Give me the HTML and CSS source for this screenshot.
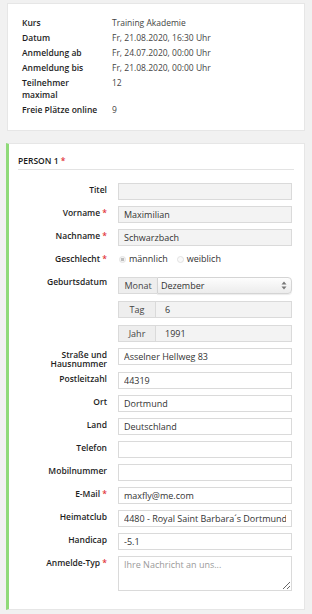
FILE: index.html
```html
<!DOCTYPE html>
<html lang="de">
<head>
<meta charset="utf-8">
<title>Anmeldung</title>
<link rel="stylesheet" href="styles.css">
</head>
<body>
<div class="page">
  <section class="card info">
    <dl class="info-grid">
      <dt>Kurs</dt><dd>Training Akademie</dd>
      <dt>Datum</dt><dd>Fr, 21.08.2020, 16:30 Uhr</dd>
      <dt>Anmeldung ab</dt><dd>Fr, 24.07.2020, 00:00 Uhr</dd>
      <dt>Anmeldung bis</dt><dd>Fr, 21.08.2020, 00:00 Uhr</dd>
      <dt>Teilnehmer<br>maximal</dt><dd>12</dd>
      <dt>Freie Plätze online</dt><dd>9</dd>
    </dl>
  </section>

  <section class="card person">
    <h2 class="person-title">PERSON 1 <span class="req">*</span></h2>
    <form class="form">
      <label class="lbl">Titel</label>
      <div class="ctl"><input class="inp gray" type="text"></div>

      <label class="lbl">Vorname <span class="req">*</span></label>
      <div class="ctl"><input class="inp gray" type="text" value="Maximilian"></div>

      <label class="lbl">Nachname <span class="req">*</span></label>
      <div class="ctl"><input class="inp gray" type="text" value="Schwarzbach"></div>

      <label class="lbl lbl-radio">Geschlecht <span class="req">*</span></label>
      <div class="ctl radios">
        <label class="radio"><input type="radio" name="g" checked><span>männlich</span></label>
        <label class="radio"><input type="radio" name="g"><span>weiblich</span></label>
      </div>

      <label class="lbl lbl-date">Geburtsdatum</label>
      <div class="ctl dates">
        <div class="group">
          <span class="addon addon-month">Monat</span>
          <div class="select-wrap">
            <select class="select"><option>Dezember</option></select>
            <svg class="arrows" width="6" height="9" viewBox="0 0 6 9"><path d="M3 0.5 L5.5 3.5 H0.5 Z M3 8.5 L5.5 5.5 H0.5 Z" fill="#777"/></svg>
          </div>
        </div>
        <div class="group">
          <span class="addon">Tag</span>
          <input class="inp gray grp-inp" type="text" value="6">
        </div>
        <div class="group">
          <span class="addon">Jahr</span>
          <input class="inp gray grp-inp" type="text" value="1991">
        </div>
      </div>

      <label class="lbl lbl-two">Straße und Hausnummer</label>
      <div class="ctl"><input class="inp" type="text" value="Asselner Hellweg 83"></div>

      <label class="lbl">Postleitzahl</label>
      <div class="ctl"><input class="inp" type="text" value="44319"></div>

      <label class="lbl">Ort</label>
      <div class="ctl"><input class="inp" type="text" value="Dortmund"></div>

      <label class="lbl">Land</label>
      <div class="ctl"><input class="inp" type="text" value="Deutschland"></div>

      <label class="lbl">Telefon</label>
      <div class="ctl"><input class="inp" type="text"></div>

      <label class="lbl">Mobilnummer</label>
      <div class="ctl"><input class="inp" type="text"></div>

      <label class="lbl">E-Mail <span class="req">*</span></label>
      <div class="ctl"><input class="inp" type="text" value="maxfly@me.com"></div>

      <label class="lbl">Heimatclub</label>
      <div class="ctl"><input class="inp" type="text" value="4480 - Royal Saint Barbara´s Dortmund"></div>

      <label class="lbl">Handicap</label>
      <div class="ctl"><input class="inp" type="text" value="-5.1"></div>

      <label class="lbl">Anmelde-Typ <span class="req">*</span></label>
      <div class="ctl"><textarea class="inp area" placeholder="Ihre Nachricht an uns..."></textarea></div>
    </form>
  </section>
</div>
</body>
</html>
```
FILE: styles.css
```css
* { box-sizing: border-box; }
html, body { margin: 0; padding: 0; }
body {
  background: #f1f1f1;
  font-family: "Open Sans", "Noto Sans", sans-serif;
  color: #222;
  width: 312px;
  height: 614px;
  overflow: hidden;
}
.page {
  padding: 3px 7px 0 7px;
  display: flex;
  flex-direction: column;
  gap: 12px;
}
.card {
  background: #fff;
  border: 1px solid #e6e6e6;
}
.info {
  padding: 13px 10px 14px 14px;
}
.info-grid {
  margin: 0;
  display: grid;
  grid-template-columns: 90px 1fr;
  row-gap: 3px;
  font-size: 8.5px;
  line-height: 12px;
}
.info-grid dt {
  font-weight: 600;
  color: #1e1e1e;
}
.info-grid dd {
  margin: 0;
  color: #444;
}
.person {
  border-left: 3px solid #8fda79;
  margin-left: -1px;
  padding: 11px 10px 18px 9px;
}
.person-title {
  margin: 0;
  font-size: 8.5px;
  font-weight: 600;
  line-height: 12px;
  padding-bottom: 2px;
  border-bottom: 1px solid #e3e3e3;
  color: #1a1a1a;
}
.req { color: #e2343a; }
.form {
  margin-top: 13px;
  padding-right: 2px;
  display: grid;
  grid-template-columns: 89px 1fr;
  column-gap: 11px;
  row-gap: 6px;
}
.lbl {
  text-align: right;
  font-size: 8.5px;
  font-weight: 600;
  line-height: 10px;
  padding-top: 2px;
  color: #1e1e1e;
}
.lbl-radio { padding-top: 2px; }
.lbl-date { padding-top: 0; }
.lbl-two {
  line-height: 9px;
  padding-top: 2px;
  margin-bottom: -2px;
}
.ctl { min-width: 0; }
.inp {
  display: block;
  width: 100%;
  height: 17px;
  border: 1px solid #dadada;
  background: #fff;
  padding: 0 5px;
  font-family: "Open Sans", sans-serif;
  font-size: 9px;
  line-height: 15px;
  color: #333;
  outline: none;
  border-radius: 0;
  margin: 0;
}
.inp.gray { background: #f3f3f3; }
.area {
  height: 35px;
  padding: 2px 5px;
  resize: vertical;
  line-height: 12px;
}
.area::placeholder { color: #9a9a9a; }
.radios {
  height: 19px;
  display: flex;
  gap: 8px;
  align-items: flex-start;
  padding-top: 1px;
}
.radio {
  display: flex;
  align-items: center;
  gap: 3px;
  font-family: "Open Sans", sans-serif;
  font-size: 9px;
  line-height: 12px;
  color: #333;
}
.radio input {
  appearance: none;
  -webkit-appearance: none;
  width: 7px;
  height: 7px;
  margin: 0 0 0 1px;
  border-radius: 50%;
  border: 1px solid #e2e2e2;
  background: #fafafa;
}
.radio input:checked {
  background: radial-gradient(circle, #bdbdbd 0 1.5px, #f4f4f4 2px);
}
.dates {
  display: flex;
  flex-direction: column;
  gap: 7px;
}
.group {
  display: flex;
  height: 17px;
}
.addon {
  flex: 0 0 37px;
  display: flex;
  align-items: center;
  justify-content: center;
  background: #eeeeee;
  border: 1px solid #dadada;
  border-right: none;
  font-family: "Open Sans", sans-serif;
  font-size: 9px;
  color: #444;
}
.addon-month { flex-basis: 39px; }
.grp-inp {
  flex: 1;
  padding-left: 9px;
}
.select-wrap {
  position: relative;
  flex: 1;
  height: 17px;
}
.select {
  display: block;
  appearance: none;
  -webkit-appearance: none;
  width: 100%;
  height: 17px;
  margin: 0;
  border: 1px solid #d4d4d4;
  border-radius: 0 4px 4px 0;
  background: linear-gradient(#fdfdfd, #ececec);
  box-shadow: 0 1px 1px rgba(0,0,0,0.08);
  font-family: "Open Sans", sans-serif;
  font-size: 9px;
  line-height: 15px;
  color: #333;
  padding: 0 12px 0 3px;
  outline: none;
}
.arrows {
  position: absolute;
  right: 5px;
  top: 4px;
  pointer-events: none;
}
```
